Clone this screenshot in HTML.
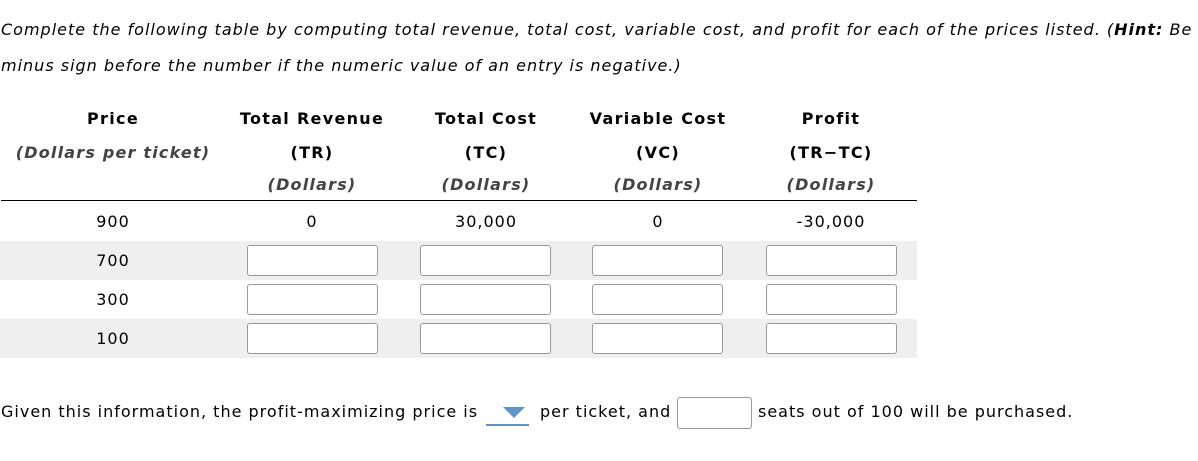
<!DOCTYPE html>
<html><head><style>
body{margin:0;width:1198px;height:461px;background:#fff;font-family:"DejaVu Sans","Liberation Sans",sans-serif;font-size:16px;color:#000;position:relative;overflow:hidden;letter-spacing:1px}
.a{position:absolute;white-space:nowrap}
.c{position:absolute;transform:translateX(-50%);white-space:nowrap}
.b{font-weight:bold;letter-spacing:1.3px}
.i{font-style:italic;font-weight:bold;color:#444;letter-spacing:1.2px}
.sh{position:absolute;left:0;width:917px;height:39px;background:#efefef}
.in{position:absolute;width:129px;height:29px;border:1px solid #999;border-radius:3px;background:#fff}
</style></head><body>
<div class="a" style="left:1px;top:20px;font-style:italic">Complete the following table by computing total revenue, total cost, variable cost, and profit for each of the prices listed. (<b>Hint:</b> Be</div>
<div class="a" style="left:1px;top:56px;font-style:italic">minus sign before the number if the numeric value of an entry is negative.)</div>

<div class="c b" style="left:113px;top:109px">Price</div>
<div class="c b" style="left:312px;top:109px">Total Revenue</div>
<div class="c b" style="left:486px;top:109px">Total Cost</div>
<div class="c b" style="left:658px;top:109px">Variable Cost</div>
<div class="c b" style="left:831px;top:109px">Profit</div>
<div class="c i" style="left:113px;top:143px">(Dollars per ticket)</div>
<div class="c b" style="left:312px;top:143px">(TR)</div>
<div class="c b" style="left:486px;top:143px">(TC)</div>
<div class="c b" style="left:658px;top:143px">(VC)</div>
<div class="c b" style="left:831px;top:143px">(TR−TC)</div>
<div class="c i" style="left:312px;top:175px">(Dollars)</div>
<div class="c i" style="left:486px;top:175px">(Dollars)</div>
<div class="c i" style="left:658px;top:175px">(Dollars)</div>
<div class="c i" style="left:831px;top:175px">(Dollars)</div>
<div class="a" style="left:1px;top:200px;width:916px;height:1px;background:#000"></div>

<div class="sh" style="top:241px"></div>
<div class="sh" style="top:319px"></div>

<div class="c" style="left:113px;top:212px">900</div>
<div class="c" style="left:312px;top:212px">0</div>
<div class="c" style="left:486px;top:212px">30,000</div>
<div class="c" style="left:658px;top:212px">0</div>
<div class="c" style="left:831px;top:212px">-30,000</div>
<div class="c" style="left:113px;top:251px">700</div>
<div class="c" style="left:113px;top:290px">300</div>
<div class="c" style="left:113px;top:329px">100</div>

<div class="in" style="left:247px;top:245px"></div><div class="in" style="left:420px;top:245px"></div><div class="in" style="left:592px;top:245px"></div><div class="in" style="left:766px;top:245px"></div>
<div class="in" style="left:247px;top:284px"></div><div class="in" style="left:420px;top:284px"></div><div class="in" style="left:592px;top:284px"></div><div class="in" style="left:766px;top:284px"></div>
<div class="in" style="left:247px;top:323px"></div><div class="in" style="left:420px;top:323px"></div><div class="in" style="left:592px;top:323px"></div><div class="in" style="left:766px;top:323px"></div>

<div class="a" style="left:1px;top:402px">Given this information, the profit-maximizing price is</div>
<div class="a" style="left:486px;top:424px;width:43px;height:2px;background:#5b95c8"></div>
<svg class="a" style="left:503px;top:407px" width="22" height="12"><polygon points="0,0 22,0 11,11" fill="#5b95c8"/></svg>
<div class="a" style="left:540px;top:402px">per ticket, and</div>
<div class="a" style="left:677px;top:397px;width:73px;height:30px;border:1px solid #999;border-radius:3px"></div>
<div class="a" style="left:758px;top:402px">seats out of 100 will be purchased.</div>
</body></html>
